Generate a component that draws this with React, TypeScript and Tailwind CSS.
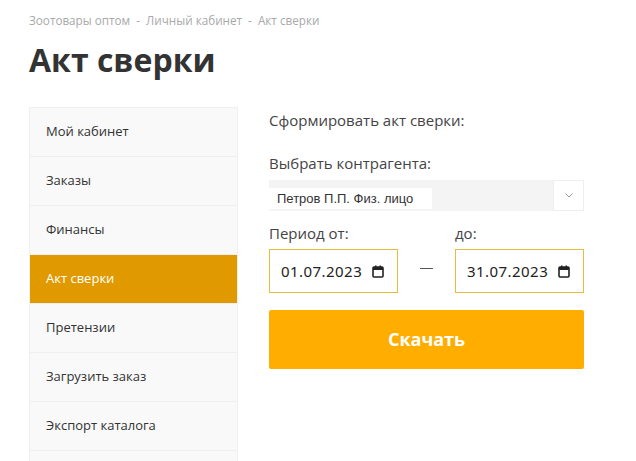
import React from "react";

const items = [
  "Мой кабинет",
  "Заказы",
  "Финансы",
  "Акт сверки",
  "Претензии",
  "Загрузить заказ",
  "Экспорт каталога",
  "",
];

function Calendar() {
  return (
    <svg width="12" height="13" viewBox="0 0 12 13" className="shrink-0">
      <rect x="1" y="2" width="10" height="10" rx="1" fill="none" stroke="#222" strokeWidth="1.6" />
      <rect x="1" y="2" width="10" height="3" fill="#222" />
      <rect x="3" y="0.5" width="1.5" height="2.5" fill="#222" />
      <rect x="7.5" y="0.5" width="1.5" height="2.5" fill="#222" />
    </svg>
  );
}

function DateBox({ value }: { value: string }) {
  return (
    <div className="flex h-[44px] w-[129px] items-center justify-between border border-[#e2bd3e] bg-white pl-[11px] pr-[13px]">
      <span className="text-[15px] tracking-[0.45px] text-[#222]" style={{ fontFamily: '"Noto Sans", sans-serif' }}>
        {value}
      </span>
      <Calendar />
    </div>
  );
}

export default function App() {
  return (
    <div className="h-[461px] w-[636px] overflow-hidden bg-white" style={{ fontFamily: '"Open Sans", sans-serif' }}>
      <div className="px-[29px] pt-[12px]">
        <div className="text-[11.7px] leading-[17px] text-[#a9a9a9]">
          Зоотовары оптом&nbsp;&nbsp;-&nbsp;&nbsp;Личный кабинет&nbsp;&nbsp;-&nbsp;&nbsp;Акт сверки
        </div>
        <h1 className="mt-[11px] text-[32px] font-bold leading-[40px] text-[#333]">Акт сверки</h1>
        <div className="mt-[27px] flex gap-[31px]">
          <ul className="w-[209px] shrink-0 border border-[#f0f0f0] bg-[#f9f9f9]">
            {items.map((t, i) => (
              <li
                key={i}
                className={
                  "flex h-[49px] items-center border-b border-[#efefef] px-[16px] text-[13px] " +
                  (t === "Акт сверки" ? "bg-[#e09a00] text-white" : "text-[#333]")
                }
              >
                {t}
              </li>
            ))}
          </ul>
          <div className="w-[315px] pt-[3px]">
            <div className="text-[15px] leading-[20px] text-[#444]">Сформировать акт сверки:</div>
            <div className="mt-[23px] text-[15px] leading-[20px] text-[#444]">Выбрать контрагента:</div>
            <div className="mt-[7px] flex h-[31px] items-stretch bg-[#f4f4f4]">
              <div className="flex flex-1 items-end pb-[2px]">
                <span
                  className="flex h-[21px] w-[163px] items-center bg-white pl-[8px] pt-[1px] text-[13px] text-[#333]"
                  style={{ fontFamily: '"Liberation Sans", Arial, sans-serif' }}
                >
                  Петров П.П. Физ. лицо
                </span>
              </div>
              <div className="flex w-[31px] items-center justify-center border border-[#eeeeee] bg-white">
                <svg width="8" height="5" viewBox="0 0 8 5">
                  <path d="M0.5 0.5 L4 4 L7.5 0.5" fill="none" stroke="#999" strokeWidth="1" />
                </svg>
              </div>
            </div>
            <div className="mt-[12px] flex">
              <div className="w-[186px] text-[15px] leading-[20px] text-[#444]">Период от:</div>
              <div className="text-[15px] leading-[20px] text-[#444]">до:</div>
            </div>
            <div className="mt-[6px] flex items-center">
              <DateBox value="01.07.2023" />
              <div className="flex w-[57px] justify-center pb-[6px]">
                <div className="h-[1px] w-[13px] bg-[#555]" />
              </div>
              <DateBox value="31.07.2023" />
            </div>
            <button className="mt-[17px] flex h-[59px] w-full items-center justify-center rounded-[2px] bg-[#ffae00] text-[18px] font-bold text-white">
              Скачать
            </button>
          </div>
        </div>
      </div>
    </div>
  );
}
